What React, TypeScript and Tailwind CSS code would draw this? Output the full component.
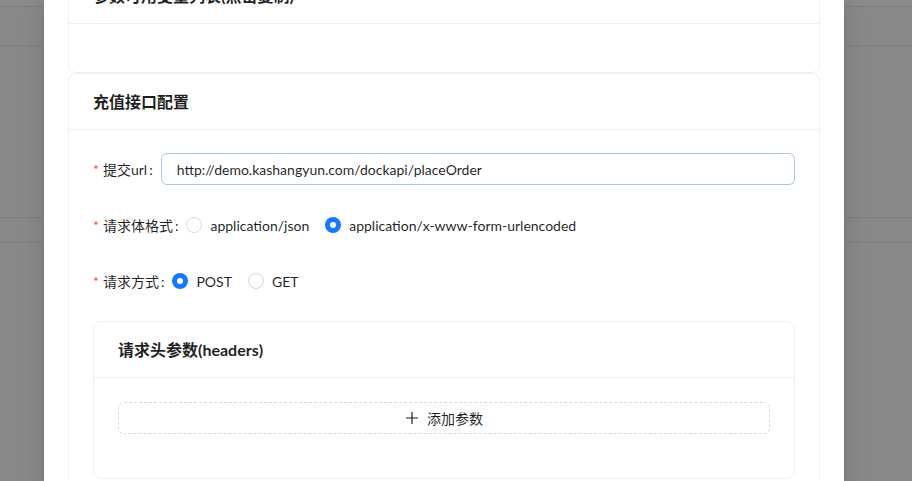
import React from "react";

const font = { fontFamily: 'Lato, "Noto Sans CJK SC", sans-serif' };

function Radio({ checked, label }: { checked?: boolean; label: string }) {
  return (
    <label className="flex items-center mr-[8px]">
      {checked ? (
        <span className="w-4 h-4 rounded-full bg-[#1677ff] flex items-center justify-center">
          <span className="w-[6px] h-[6px] rounded-full bg-white" />
        </span>
      ) : (
        <span className="w-4 h-4 rounded-full border border-[#d9d9d9] bg-white" />
      )}
      <span className="px-2 text-[14px] text-[rgba(0,0,0,0.88)]">{label}</span>
    </label>
  );
}

function Label({ text }: { text: string }) {
  return (
    <div className="flex items-center h-8 text-[14px] text-[rgba(0,0,0,0.88)] shrink-0">
      <span className="text-[#ff4d4f] mr-[4px] text-[14px]">*</span>
      <span>{text}</span>
      <span className="ml-[2px] mr-[8px]">:</span>
    </div>
  );
}

export default function App() {
  return (
    <div className="relative w-[912px] h-[481px] overflow-hidden bg-[#898989]" style={font}>
      {/* backdrop page lines */}
      <div className="h-[7px] bg-[#8b8b8b] border-b border-[#7c7c7c]" />
      <div className="h-[39px] border-b border-[#7f7f7f]" />
      <div className="h-[172px] border-b border-[#7f7f7f]" />
      <div className="h-[25px] border-b border-[#7f7f7f]" />

      {/* modal */}
      <div className="absolute left-[44px] top-0 w-[800px] h-[481px] bg-white overflow-hidden shadow-[0_6px_16px_0_rgba(0,0,0,0.08),0_3px_6px_-4px_rgba(0,0,0,0.12),0_9px_28px_8px_rgba(0,0,0,0.05)]">
        <div className="px-6 mt-[-33px]">
          {/* card 1 */}
          <div className="border border-[#f0f0f0] rounded-lg">
            <div className="h-[56px] px-6 flex items-center border-b border-[#f0f0f0] text-[16px] font-bold text-[rgba(0,0,0,0.88)]">
              参数可用变量列表(点击复制)
            </div>
            <div className="h-[48px]" />
          </div>

          {/* card 2 */}
          <div className="border border-[#f0f0f0] rounded-lg">
            <div className="h-[56px] px-6 flex items-center border-b border-[#f0f0f0] text-[16px] font-bold text-[rgba(0,0,0,0.88)]">
              充值接口配置
            </div>
            <div className="px-6 pt-[23px] pb-6">
              <div className="flex items-center mb-6">
                <Label text="提交url" />
                <div className="flex-1 h-8 rounded-[6px] border border-[#abc5e9] bg-white flex items-center px-[15px] text-[14px] text-[rgba(0,0,0,0.88)]">
                  http://demo.kashangyun.com/dockapi/placeOrder
                </div>
              </div>
              <div className="flex items-center mb-6">
                <Label text="请求体格式" />
                <div className="flex items-center h-8">
                  <Radio label="application/json" />
                  <Radio checked label="application/x-www-form-urlencoded" />
                </div>
              </div>
              <div className="flex items-center mb-6">
                <Label text="请求方式" />
                <div className="flex items-center h-8">
                  <Radio checked label="POST" />
                  <Radio label="GET" />
                </div>
              </div>

              {/* inner card */}
              <div className="border border-[#f0f0f0] rounded-lg">
                <div className="h-[56px] px-6 flex items-center border-b border-[#f0f0f0] text-[16px] font-bold text-[rgba(0,0,0,0.88)]">
                  请求头参数(headers)
                </div>
                <div className="px-6 pt-6 pb-[44px]">
                  <div className="h-8 rounded-[6px] border border-dashed border-[#d9d9d9] flex items-center justify-center gap-2 text-[14px] text-[rgba(0,0,0,0.88)]">
                    <svg width="14" height="14" viewBox="0 0 14 14" fill="none">
                      <path d="M7 1v12M1 7h12" stroke="rgba(0,0,0,0.88)" strokeWidth="1.2" />
                    </svg>
                    <span>添加参数</span>
                  </div>
                </div>
              </div>
            </div>
          </div>
        </div>
      </div>
    </div>
  );
}
